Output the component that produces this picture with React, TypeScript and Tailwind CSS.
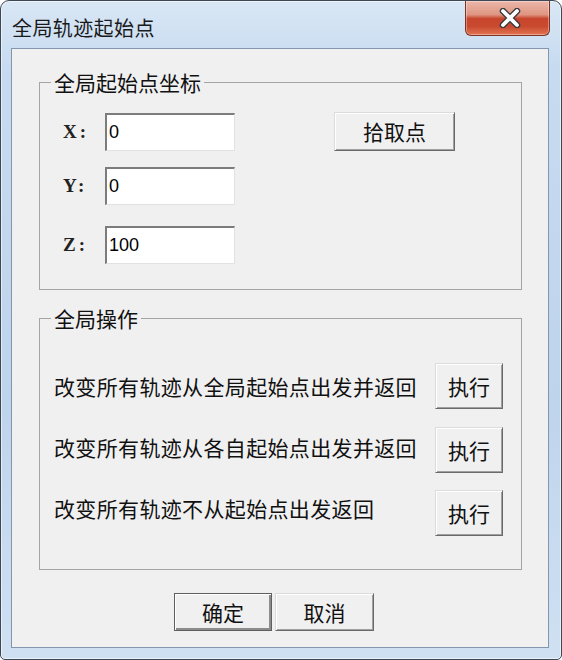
import React from 'react';

const cjk = "font-['Noto_Sans_CJK_SC','Noto_Sans',sans-serif]";

const btnNormal =
  'flex items-center justify-center bg-[#f0f0f0] border border-t-[#dcdcdc] border-l-[#dcdcdc] border-r-[#6a6a6a] border-b-[#6a6a6a] shadow-[inset_1px_1px_0_#ffffff,inset_-1px_-1px_0_#a0a0a0] text-[21px] leading-none text-[#111]';

const btnDefault =
  'flex items-center justify-center bg-[#f0f0f0] border border-[#5f5f5f] shadow-[inset_1px_1px_0_#ffffff,inset_-2px_-2px_0_#8c8c8c] text-[21px] leading-none text-[#111]';

const CoordRow: React.FC<{ label: string; value: string; className?: string }> = ({ label, value, className }) => (
  <div className={`flex items-center ${className ?? ''}`}>
    <span className="w-[54px] pl-[12px] font-['Liberation_Serif',serif] text-[19px] font-bold tracking-[3px] text-[#222]">{label}</span>
    <div className="h-[38px] w-[130px] bg-white border-t-2 border-l-2 border-t-[#7c7c7c] border-l-[#7c7c7c] border-r border-b border-r-[#e2e2e2] border-b-[#e2e2e2] pl-[2px] pt-[7px] font-['Liberation_Sans',sans-serif] text-[18px] leading-[20px] text-black">
      {value}
    </div>
  </div>
);

const ActionRow: React.FC<{ text: string; className?: string; textClass?: string }> = ({ text, className, textClass }) => (
  <div className={`flex items-center h-[46px] ${className ?? ''}`}>
    <span className={`w-[384px] pl-[3px] text-[21px] leading-[26px] tracking-[0.35px] text-[#111] ${textClass ?? ''}`}>{text}</span>
    <button className={`${btnNormal} h-[46px] w-[68px]`}>执行</button>
  </div>
);

export default function App() {
  return (
    <div className={`w-[562px] h-[660px] bg-white ${cjk}`}>
      <div className="flex flex-col w-[562px] h-[660px] rounded-t-[9px] rounded-b-[5px] border border-[#3e4855] bg-[linear-gradient(180deg,#d9e7f5_0%,#c7dbf0_10%,#bed4ec_60%,#cfe0f2_100%)] shadow-[inset_0_0_0_1px_rgba(255,255,255,0.55)]">
        {/* Title bar */}
        <div className="flex h-[47px] items-start">
          <span className="ml-[11px] mt-[15px] text-[20px] leading-[24px] tracking-[0.4px] text-[#1a1a1a]">全局轨迹起始点</span>
          <div className="ml-auto mr-[11px] flex h-[35px] w-[85px] items-center justify-center rounded-b-[6px] border border-t-0 border-[#7d3325] bg-[linear-gradient(180deg,#ecb7aa_0%,#df9581_40%,#c7452c_52%,#c94a30_75%,#e27552_100%)] shadow-[inset_0_0_0_1px_rgba(255,255,255,0.35)]">
            <svg width="24" height="20" viewBox="0 0 24 20" className="ml-[4px]">
              <path d="M5 3 L19 17 M19 3 L5 17" stroke="#3a3a3a" strokeWidth="6.5" strokeLinecap="round" />
              <path d="M5 3 L19 17 M19 3 L5 17" stroke="#ffffff" strokeWidth="3.8" strokeLinecap="round" />
            </svg>
          </div>
        </div>

        {/* Client area */}
        <div className="ml-[10px] w-[538px] h-[600px] border border-[#8396ad] bg-[#f0f0f0] text-[#111]">
          <fieldset className="ml-[27px] mt-[21px] h-[220px] w-[483px] border border-[#a4a4a4] pl-[11px]">
            <legend className="px-[3px] text-[21px] leading-[24px]">全局起始点坐标</legend>
            <div className="mt-[19px] flex items-start">
              <div className="flex flex-col">
                <CoordRow label="X:" value="0" />
                <CoordRow label="Y:" value="0" className="mt-[16px]" />
                <CoordRow label="Z:" value="100" className="mt-[21px]" />
              </div>
              <button className={`${btnNormal} ml-[99px] -mt-[1px] h-[39px] w-[121px]`}>拾取点</button>
            </div>
          </fieldset>

          <fieldset className="ml-[27px] mt-[16px] h-[264px] w-[483px] border border-[#a4a4a4] pl-[11px]">
            <legend className="px-[3px] text-[21px] leading-[24px]">全局操作</legend>
            <div className="mt-[33px] flex flex-col">
              <ActionRow text="改变所有轨迹从全局起始点出发并返回" />
              <ActionRow text="改变所有轨迹从各自起始点出发并返回" className="mt-[18px]" textClass="mb-[6px]" />
              <ActionRow text="改变所有轨迹不从起始点出发返回" className="mt-[17px]" textClass="mb-[10px]" />
            </div>
          </fieldset>

          <div className="ml-[162px] mt-[23px] flex">
            <button className={`${btnDefault} h-[38px] w-[98px]`}>确定</button>
            <button className={`${btnNormal} ml-[3px] h-[38px] w-[99px]`}>取消</button>
          </div>
        </div>
      </div>
    </div>
  );
}
